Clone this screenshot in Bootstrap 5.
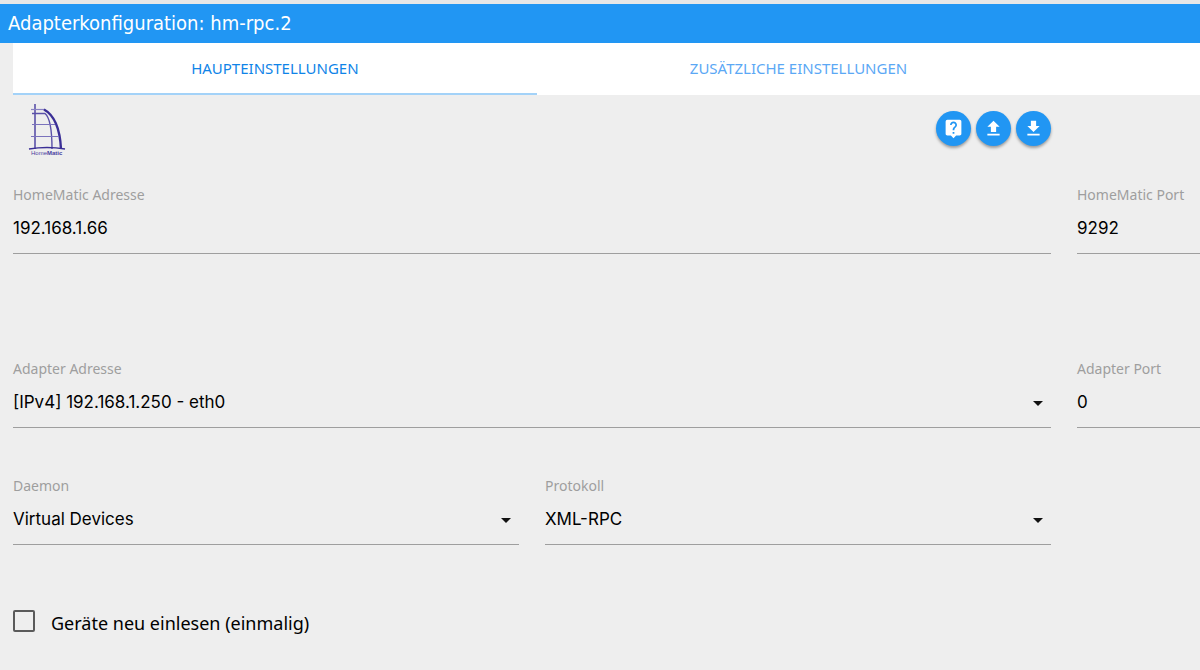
<!DOCTYPE html>
<html lang="de">
<head>
<meta charset="utf-8">
<meta name="viewport" content="width=device-width, initial-scale=1">
<title>Adapterkonfiguration: hm-rpc.2</title>
<link href="https://cdn.jsdelivr.net/npm/bootstrap@5.3.0/dist/css/bootstrap.min.css" rel="stylesheet">
<style>
  :root { --blue: #2196f3; --gutter: 13px; }
  body { background: #eee; color: #000; font-family: "Noto Sans", sans-serif; overflow-x: hidden; }
  .title-bar { background: var(--blue); border-top: 4px solid #e7e7e7; padding: 0 8px; }
  .title-bar h1 { font-family: "DejaVu Sans Condensed", "Noto Sans", sans-serif; font-size: 20px; line-height: 39px; font-weight: 400; }
  .main-tabs { display: grid; grid-template-columns: 15fr 15fr 4fr; margin-left: var(--gutter); }
  .main-tabs a { color: #5ba8f5; font-size: 15px; line-height: 50px; border-bottom: 2px solid transparent; }
  .main-tabs a.active { color: #0f84e8; border-bottom-color: #a3d2f8; }
  .form-grid { display: grid; grid-template-columns: 133fr 133fr 34fr; }
  .form-grid > * { padding: 0 var(--gutter); min-width: 0; }
  .wide { grid-column: span 2; }
  .form-grid > .edge { padding-right: 0; }
  .form-grid > .tools { height: 88px; padding-top: 8px; }
  .tool-set { gap: 5px; }
  .round-btn { width: 35px; height: 35px; background: var(--blue); border: 0; box-shadow: 0 2px 3px rgba(0,0,0,.35); }
  .main-fields { display: grid; row-gap: 46px; }
  .after-address { margin-bottom: 57px; }
  .field label { display: block; color: #9e9e9e; font-size: 14px; line-height: 24px; }
  .field input, .field select {
    display: block; width: 100%; height: 47px; padding: 0 0 5px; border: 0; border-bottom: 1px solid #9e9e9e; border-radius: 0;
    background: transparent; color: #000; font: 17px/24px Inter, sans-serif; appearance: none; outline: 0;
  }
  .field select {
    background: url("data:image/svg+xml,%3Csvg xmlns='http://www.w3.org/2000/svg' width='12' height='6'%3E%3Cpath d='M1 0h10L6 5z' fill='%23111'/%3E%3C/svg%3E") no-repeat right 7px top 20px;
  }
  .check-line { padding: 65px var(--gutter) 0; }
  .check-line input { appearance: none; width: 22px; height: 22px; border: 2px solid #5a5a5a; border-radius: 2px; margin: 0; }
  .check-line label { font-size: 18px; line-height: 26px; }
</style>
</head>
<body>
<header class="title-bar text-white"><h1 class="m-0">Adapterkonfiguration: hm-rpc.2</h1></header>
<nav class="main-tabs bg-white text-center">
  <a class="active text-decoration-none" href="#main">HAUPTEINSTELLUNGEN</a>
  <a class="text-decoration-none" href="#extra">ZUSÄTZLICHE EINSTELLUNGEN</a>
</nav>
<main id="main">
  <div class="form-grid">
    <div class="wide tools d-flex justify-content-between align-items-start">
      <svg width="68" height="54" viewBox="0 0 68 54" role="img" aria-label="HomeMatic">
        <g fill="none" stroke="#3b2f96">
          <path d="M22 1v45" stroke-width="1.600" stroke="#5a50a8"/>
          <path d="M18 6.500h14" stroke-width="1.200" stroke="#8a82c4"/>
          <path d="M31 6.500C41 12 47 26 48 46" stroke-width="2.400"/>
          <path d="M19 10.500h13c5 4 7 18 7 35.500" stroke-width="1.400" stroke="#5a50a8"/>
          <path d="M19 21.500h23M18 33.500h28" stroke-width="1.200" stroke="#7a72bc"/>
          <path d="M16 46q18-3 36 0" stroke-width="1.600"/>
        </g>
        <text x="18" y="52" font-family="Liberation Sans, sans-serif" font-size="6" fill="#4a3fa0">Home<tspan font-weight="700">Matic</tspan></text>
      </svg>
      <div class="tool-set d-flex pt-2">
        <button class="round-btn rounded-circle p-0 d-flex align-items-center justify-content-center" type="button" aria-label="Hilfe">
          <svg width="21" height="21" viewBox="0 0 24 24" fill="#fff"><path d="M19 2H5a2 2 0 0 0-2 2v14c0 1.100.9 2 2 2h4l3 3 3-3h4c1.100 0 2-.9 2-2V4c0-1.100-.9-2-2-2zm-6 16h-2v-2h2v2zm2.070-7.750-.9.920C13.450 11.900 13 12.500 13 14h-2v-.5c0-1.100.450-2.100 1.170-2.830l1.240-1.260c.370-.360.590-.860.590-1.410 0-1.100-.9-2-2-2s-2 .9-2 2H8c0-2.210 1.790-4 4-4s4 1.790 4 4c0 .880-.360 1.680-.930 2.250z"/></svg>
        </button>
        <button class="round-btn rounded-circle p-0 d-flex align-items-center justify-content-center" type="button" aria-label="Hochladen">
          <svg width="21" height="21" viewBox="0 0 24 24" fill="#fff"><path d="M9 16h6v-6h4l-7-7-7 7h4zm-4 2h14v2H5z"/></svg>
        </button>
        <button class="round-btn rounded-circle p-0 d-flex align-items-center justify-content-center" type="button" aria-label="Herunterladen">
          <svg width="21" height="21" viewBox="0 0 24 24" fill="#fff"><path d="M19 9h-4V3H9v6H5l7 7 7-7zM5 18v2h14v-2H5z"/></svg>
        </button>
      </div>
    </div>
  </div>
  <div class="main-fields">
    <div class="form-grid after-address">
      <div class="field wide"><label for="ha">HomeMatic Adresse</label><input id="ha" type="text" value="192.168.1.66"></div>
      <div class="field edge"><label for="hp">HomeMatic Port</label><input id="hp" type="text" value="9292"></div>
    </div>
    <div class="form-grid">
      <div class="field wide"><label for="aa">Adapter Adresse</label><select id="aa"><option>[IPv4] 192.168.1.250 - eth0</option></select></div>
      <div class="field edge"><label for="ap">Adapter Port</label><input id="ap" type="text" value="0"></div>
    </div>
    <div class="form-grid">
      <div class="field"><label for="dm">Daemon</label><select id="dm"><option>Virtual Devices</option></select></div>
      <div class="field"><label for="pr">Protokoll</label><select id="pr"><option>XML-RPC</option></select></div>
    </div>
  </div>
  <div class="check-line d-flex align-items-start gap-3">
    <input type="checkbox" id="re"><label for="re">Geräte neu einlesen (einmalig)</label>
  </div>
</main>
<script src="https://cdn.jsdelivr.net/npm/bootstrap@5.3.0/dist/js/bootstrap.bundle.min.js"></script>
</body>
</html>
